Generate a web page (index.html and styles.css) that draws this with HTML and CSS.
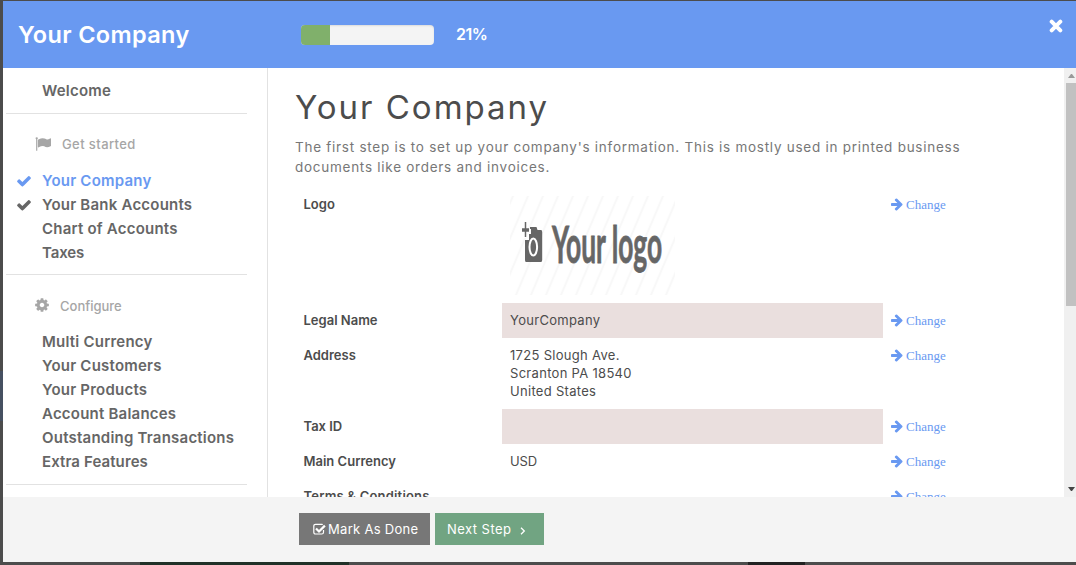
FILE: index.html
```html
<!DOCTYPE html>
<html lang="en">
<head>
<meta charset="utf-8">
<title>Your Company</title>
<link rel="stylesheet" href="styles.css">
</head>
<body>
<svg class="defs" width="0" height="0">
  <symbol id="check" viewBox="0 0 1792 1792"><path d="M1671 566q0 40-28 68l-724 724-136 136q-28 28-68 28t-68-28l-136-136-362-362q-28-28-28-68t28-68l136-136q28-28 68-28t68 28l294 295 656-657q28-28 68-28t68 28l136 136q28 28 28 68z"/></symbol>
  <symbol id="arrow" viewBox="0 0 1536 1792"><path d="M1472 960q0 54-37 91l-651 651q-39 37-91 37-51 0-90-37l-75-75q-38-38-38-91t38-91l293-293H117q-52 0-84.500-37.500T0 1024V896q0-53 32.500-90.500T117 768h704L528 474q-38-36-38-90t38-90l75-75q38-38 90-38 53 0 91 38l651 651q37 35 37 90z"/></symbol>
  <symbol id="flag" viewBox="0 0 1792 1792"><path d="M320 256q0 72-64 110v1266q0 13-9.500 22.500T224 1664h-64q-13 0-22.500-9.500T128 1632V366q-64-38-64-110 0-53 37.500-90.500T192 128t90.500 37.500T320 256zm1472 64v763q0 25-12.500 38.500T1740 1149q-215 116-369 116-61 0-123.500-22t-108.500-48-115.500-48-142.500-22q-192 0-464 146-17 9-33 9-26 0-45-19t-19-45V474q0-32 31-55 21-14 79-43 236-120 421-120 107 0 200 29t219 88q38 19 88 19 54 0 117.500-21t110-47 88-47T1728 256q26 0 45 19t19 45z"/></symbol>
  <symbol id="gear" viewBox="0 0 1536 1792"><path d="M1024 896q0-106-75-181t-181-75-181 75-75 181 75 181 181 75 181-75 75-181zm512-109v222q0 12-8 23t-20 13l-185 28q-19 54-39 91 35 50 107 138 10 12 10 25t-9 23q-27 37-99 108t-94 71q-12 0-26-9l-138-108q-44 23-91 38-16 136-29 186-7 28-36 28H657q-14 0-24.500-8.500T621 1642l-28-184q-49-16-90-37l-141 107q-10 9-25 9-14 0-25-11-126-114-165-168-7-10-7-23 0-12 8-23 15-21 51-66.500t54-70.500q-27-50-41-99L29 1048q-13-2-21-12.500T0 1012V790q0-12 8-23t19-13l186-28q14-46 39-92-40-57-107-138-10-12-10-24 0-10 9-23 26-36 98.500-107.500T337 270q13 0 26 10l138 107q44-23 91-38 16-136 29-186 7-28 36-28h222q14 0 24.500 8.500T915 165l28 184q49 16 90 37l142-107q9-9 24-9 13 0 25 10 129 119 165 170 7 8 7 22 0 12-8 23-15 21-51 66.500t-54 70.500q26 50 41 98l183 28q13 2 21 12.500t8 23.500z"/></symbol>
  <symbol id="times" viewBox="0 0 12 12"><path d="M2.300 2.300 9.700 9.700M9.700 2.300 2.300 9.700" fill="none" stroke="currentColor" stroke-width="3.400" stroke-linecap="round"/></symbol>
</svg>
<main class="modal">
  <header class="top">
    <div class="top-title"><span>Your Company</span></div>
    <div class="progress"><div class="bar"></div></div>
    <div class="percent">21%</div>
    <svg class="close"><use href="#times"/></svg>
  </header>
  <div class="body">
    <nav class="side">
      <ul class="group first"><li>Welcome</li></ul>
      <div class="caption"><svg class="flag"><use href="#flag"/></svg><span class="get">Get started</span></div>
      <ul class="group started">
        <li class="active"><svg><use href="#check"/></svg>Your Company</li>
        <li><svg><use href="#check"/></svg>Your Bank Accounts</li>
        <li>Chart of Accounts</li>
        <li class="taxes">Taxes</li>
      </ul>
      <div class="caption"><svg class="gear"><use href="#gear"/></svg><span>Configure</span></div>
      <ul class="group configure">
        <li>Multi Currency</li>
        <li>Your Customers</li>
        <li>Your Products</li>
        <li>Account Balances</li>
        <li>Outstanding Transactions</li>
        <li class="extra">Extra Features</li>
      </ul>
    </nav>
    <section class="content">
      <h1>Your Company</h1>
      <p class="intro">The first step is to set up your company's information. This is mostly used in printed business<br>documents like orders and invoices.</p>
      <div class="table">
        <div class="row logo-row"><b>Logo</b><div class="value">
          <svg class="logo" viewBox="0 0 165 99">
            <defs><pattern id="stripes" width="15" height="99" patternUnits="userSpaceOnUse" patternTransform="skewX(-23)"><path d="M3 0V99" stroke="#f8f8f8" stroke-width="2.500"/></pattern></defs>
            <rect width="165" height="99" fill="url(#stripes)"/>
            <path d="M20 31h6.500l1 3H31q1.200 0 1.200 2v28q0 2-1.200 2H16q-1 0-1-2V44h4v-6h2V33h-1z" fill="#666"/>
            <path d="M15.500 26v16M12 34h7" stroke="#fff" stroke-width="3.500"/>
            <path d="M15.500 26v15" stroke="#666" stroke-width="1.500"/>
            <path d="M12 34h7" stroke="#666" stroke-width="3.500"/>
            <ellipse cx="23.300" cy="51" rx="3.800" ry="8.500" fill="#666" stroke="#fff" stroke-width="2"/>
            <text class="logo-text" transform="translate(42 67) scale(.54 1)" textLength="204" lengthAdjust="spacingAndGlyphs">Your logo</text>
          </svg></div><a><svg><use href="#arrow"/></svg>Change</a></div>
        <div class="row"><b>Legal Name</b><div class="value pink">YourCompany</div><a><svg><use href="#arrow"/></svg>Change</a></div>
        <div class="row"><b>Address</b><div class="value address">1725 Slough Ave.<br>Scranton PA 18540<br>United States</div><a><svg><use href="#arrow"/></svg>Change</a></div>
        <div class="row"><b>Tax ID</b><div class="value pink"></div><a><svg><use href="#arrow"/></svg>Change</a></div>
        <div class="row"><b>Main Currency</b><div class="value usd">USD</div><a><svg><use href="#arrow"/></svg>Change</a></div>
        <div class="row"><b class="terms">Terms &amp; Conditions</b><div class="value"></div><a><svg><use href="#arrow"/></svg>Change</a></div>
      </div>
    </section>
    <div class="scroll"><i class="up"></i><div class="thumb"></div><i class="down"></i></div>
  </div>
  <footer class="foot">
    <div class="btn done"><svg viewBox="0 0 13 12"><path d="M10.500 7v2.200q0 1.800-1.800 1.800H2.600Q.8 11 .8 9.200V3.100q0-1.800 1.800-1.800h6.200q.6 0 1 .2" fill="none" stroke="#fff" stroke-width="1.200"/><path d="M3 5.500 6 8.500 11.900 2.600" fill="none" stroke="#fff" stroke-width="2.200"/></svg><span>Mark As Done</span></div>
    <div class="btn next"><span>Next Step</span><svg viewBox="0 0 6 8"><path d="M1 .8 4.300 4 1 7.200" fill="none" stroke="#fff" stroke-width="1.300"/></svg></div>
  </footer>
</main>
</body>
</html>
```
FILE: styles.css
```css
* { box-sizing: border-box; }
body {
  margin: 0; width: 1076px; height: 565px; overflow: hidden;
  padding: 1px 0 3px 3px;
  background:
    linear-gradient(90deg, transparent 140px, #213128 140px 349px, transparent 349px 748px, #222 748px 805px, transparent 805px) 0 562px / 100% 3px no-repeat,
    linear-gradient(#4c4c4c 371px, #465061 371px 421px, #4c4c4c 421px);
  font-family: Inter, "Liberation Sans", sans-serif;
}
.defs { position: absolute; }
svg { fill: currentColor; flex: none; }
.modal { height: 561px; display: flex; flex-direction: column; background: #fff; }
.top { height: 67px; flex: none; display: flex; background: #6999f1; color: #fff; }
.top-title { width: 298px; padding: 19px 0 0 15px; font-size: 23.500px; line-height: 30px; font-weight: 600; letter-spacing: .350px; }
.progress { width: 133px; height: 20px; margin-top: 24px; border-radius: 4px; overflow: hidden; background: #f4f4f4; box-shadow: inset 0 1px 2px rgba(0,0,0,.1); }
.bar { width: 29px; height: 100%; background: #80b06b; }
.percent { margin: 22px 0 0 22px; font-size: 16px; line-height: 22px; font-weight: 600; letter-spacing: -.5px; }
.close { width: 14px; height: 14px; margin: 18px 13px 0 auto; }
.body { height: 429px; flex: none; display: flex; overflow: hidden; }
.side { width: 265px; flex: none; border-right: 1px solid #e2e2e2; color: #666; }
.group { list-style: none; margin: 0 20px 0 3px; padding: 0 0 0 36px; border-bottom: 1px solid #e2e2e2; font-size: 15px; font-weight: 600; line-height: 24px; letter-spacing: .22px; white-space: nowrap; }
.group li { position: relative; height: 24px; }
.group .taxes { letter-spacing: -.1px; }
.group .extra { letter-spacing: .1px; }
.first { height: 46px; padding-top: 11px; }
.started { height: 106px; }
.configure { height: 155px; }
.group svg { position: absolute; left: -26px; top: 4px; width: 16px; height: 16px; }
.active { color: #6999f1; }
.caption { height: 55px; display: flex; padding: 20px 0 0 32px; color: #a6a6a6; font-size: 13px; font-weight: 500; line-height: 22px; }
.caption svg { width: 16px; height: 16px; margin: 2px 11px 0 0; }
.get { margin-top: -1px; letter-spacing: .4px; }
.caption .gear { width: 14px; margin-right: 11px; }
.content { width: 796px; flex: none; padding: 0 0 0 27px; color: #4c4c4c; }
h1 { margin: 18px 0 0; font-size: 33px; line-height: 42px; font-weight: 400; letter-spacing: 1.980px; }
.intro { margin: 9px 0 0; font-size: 13.500px; line-height: 20px; color: #777; white-space: nowrap; letter-spacing: .735px; }
.table { margin-top: 10px; }
.row { display: grid; grid-template-columns: 207px 381px 100px; font-size: 13px; line-height: 18px; }
.row > * { padding: 8px 8px 9px; min-height: 35px; }
.row b { font-weight: 600; padding-left: 8.500px; }
.row .terms { letter-spacing: .2px; }
.value { letter-spacing: .3px; }
.usd { letter-spacing: -.1px; }
.row a { display: flex; padding: 9px 0 8px 8px; color: #6999f1; font: 13px/18px "Liberation Serif", serif; }
.row a svg { width: 12px; height: 14px; margin: 1px 3px 0 0; }
.pink { background: #eadfde; }
.logo-row { height: 116px; }
.row .value.address { height: 71px; }
.logo { display: block; width: 165px; height: 99px; margin-top: 1px; }
.logo-text { font: 700 51px Lato, sans-serif; fill: #666; stroke: #666; stroke-width: .8px; letter-spacing: 0; }
.scroll { width: 12px; flex: none; display: flex; flex-direction: column; padding-left: 2px; background: #f0f0f0; }
.thumb { height: 223px; background: #c1c1c1; }
.up { margin: 6px 0 5px 2px; width: 7px; border: solid transparent; border-width: 0 3.500px 4px; border-bottom-color: #999; }
.down { margin: auto 0 6px 2px; width: 7px; border: solid transparent; border-width: 4px 3.500px 0; border-top-color: #444; }
.foot { height: 65px; display: flex; gap: 5px; padding: 16px 0 0 296px; background: #f4f4f4; }
.btn { height: 32px; display: flex; align-items: center; color: #fff; font-size: 13px; letter-spacing: .3px; }
.done { width: 131px; padding-left: 14px; background: #777; }
.done svg { width: 13px; height: 12px; margin-right: 2px; }
.next { width: 109px; padding-left: 12px; background: #71a482; }
.next span { letter-spacing: .45px; }
.next svg { width: 6px; height: 8px; margin: 3px 0 0 9px; }
```
